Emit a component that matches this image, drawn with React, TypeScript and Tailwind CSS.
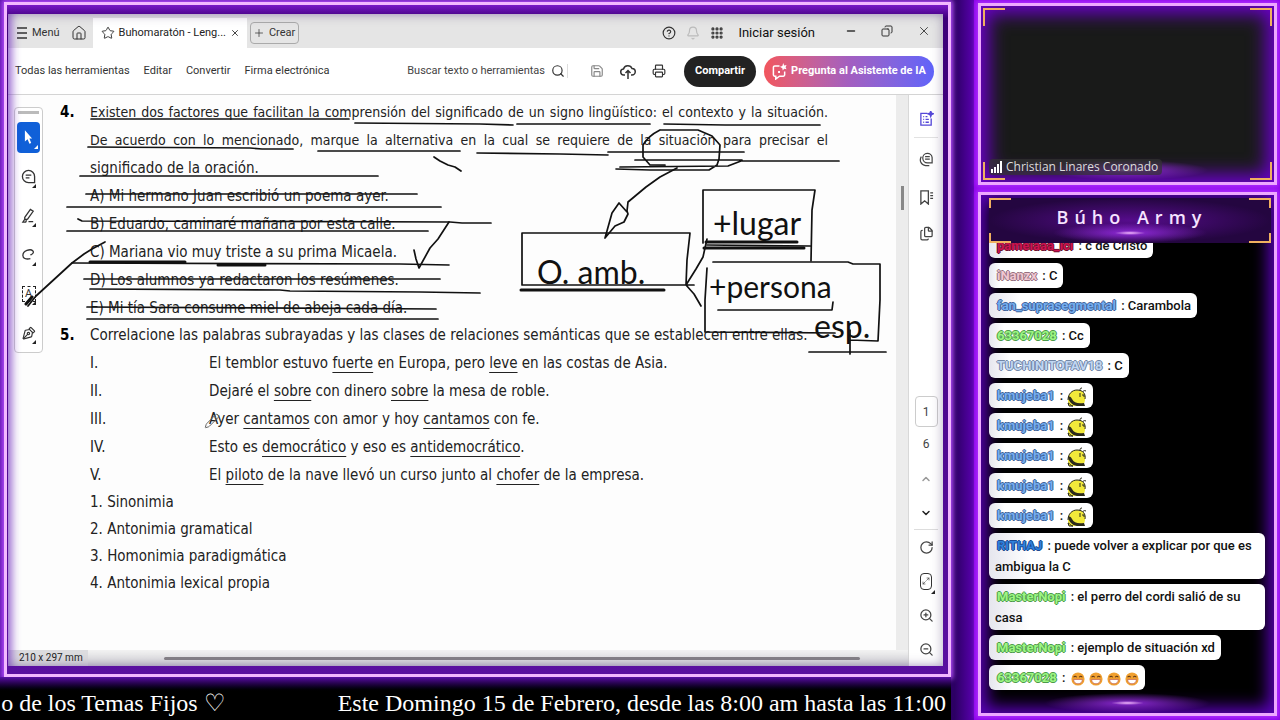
import type { ReactNode } from 'react';
import {
  Bell,
  ChevronDown,
  ChevronUp,
  CircleHelp,
  Copy,
  Files,
  Grip,
  House,
  Maximize2,
  Minus,
  Pencil,
  PenTool,
  Plus,
  Printer,
  RotateCw,
  Save,
  Search,
  Star,
  X,
  ZoomIn,
  ZoomOut,
} from 'lucide-react';

type Message = {
  user: string;
  color: string;
  text?: string;
  emote?: 'bee' | 'grin';
  count?: number;
};

const GREEN = 'text-[#9cf582] [text-shadow:1px_0_#4c9a4a,-1px_0_#4c9a4a,0_1px_#4c9a4a,0_-1px_#4c9a4a]';
const BLUE = 'text-[#74aef0] [text-shadow:1px_0_#3f6298,-1px_0_#3f6298,0_1px_#3f6298,0_-1px_#3f6298]';
const NAVY = 'text-[#2f80dc] [text-shadow:1px_0_#1d4a90,-1px_0_#1d4a90,0_1px_#1d4a90,0_-1px_#1d4a90]';
const ICE = 'text-[#c0d6f2] [text-shadow:1px_0_#7186a6,-1px_0_#7186a6,0_1px_#7186a6,0_-1px_#7186a6]';
const PINK = 'text-[#f0c6d2] [text-shadow:1px_0_#96707e,-1px_0_#96707e,0_1px_#96707e,0_-1px_#96707e]';
const RED = 'text-[#cc1450] [text-shadow:1px_0_#6e0e30,-1px_0_#6e0e30,0_1px_#6e0e30,0_-1px_#6e0e30]';

const messages: Message[] = [
  { user: 'pamelaaa_lcl', color: RED, text: 'c de Cristo' },
  { user: 'iNanzx', color: PINK, text: 'C' },
  { user: 'fan_suprasegmental', color: BLUE, text: 'Carambola' },
  { user: '63367028', color: GREEN, text: 'Cc' },
  { user: 'TUCHINITOFAV18', color: ICE, text: 'C' },
  { user: 'kmujeba1', color: BLUE, emote: 'bee' },
  { user: 'kmujeba1', color: BLUE, emote: 'bee' },
  { user: 'kmujeba1', color: BLUE, emote: 'bee' },
  { user: 'kmujeba1', color: BLUE, emote: 'bee' },
  { user: 'kmujeba1', color: BLUE, emote: 'bee' },
  { user: 'RITHAJ', color: NAVY, text: 'puede volver a explicar por que es ambigua la C' },
  { user: 'MasterNopi', color: GREEN, text: 'el perro del cordi salió de su casa' },
  { user: 'MasterNopi', color: GREEN, text: 'ejemplo de situación xd' },
  { user: '63367028', color: GREEN, emote: 'grin', count: 4 },
];

const options = [
  'A) Mi hermano Juan escribió un poema ayer.',
  'B) Eduardo, caminaré mañana por esta calle.',
  'C) Mariana vio muy triste a su prima Micaela.',
  'D) Los alumnos ya redactaron los resúmenes.',
  'E) Mi tía Sara consume miel de abeja cada día.',
];

const sentences: [string, ReactNode][] = [
  ['I.', <>El temblor estuvo <u>fuerte</u> en Europa, pero <u>leve</u> en las costas de Asia.</>],
  ['II.', <>Dejaré el <u>sobre</u> con dinero <u>sobre</u> la mesa de roble.</>],
  ['III.', <>Ayer <u>cantamos</u> con amor y hoy <u>cantamos</u> con fe.</>],
  ['IV.', <>Esto es <u>democrático</u> y eso es <u>antidemocrático</u>.</>],
  ['V.', <>El <u>piloto</u> de la nave llevó un curso junto al <u>chofer</u> de la empresa.</>],
];

const relations = ['1. Sinonimia', '2. Antonimia gramatical', '3. Homonimia paradigmática', '4. Antonimia lexical propia'];

function Bee() {
  return (
    <svg viewBox="0 0 20 20" className="-my-1 inline-block w-5 h-5 align-middle" role="img" aria-label="bee">
      <path d="M1 13C1 7 5 3 10 3c6 0 9 4 8 9 0 3-1 5-2 6l2 1H3c-2-1-2-4-2-6z" fill="#f2e93a" />
      <path d="M1 10c2-1 3 0 4 2 2 4 6 5 12 4l1 3h-8C5 18 2 15 1 10z" fill="#2b2a1c" />
      <path d="M1 16c2 0 2 3 5 3H2z" fill="#f2e93a" stroke="#2b2a1c" />
      <path d="M1 13C1 7 5 3 10 3c6 0 9 4 8 9" stroke="#2b2a1c" fill="none" />
      <path d="M13 4c0-2 0-3 2-3M16 5c0-1 1-2 3-1M13 6v4M16 7v2h2" stroke="#2b2a1c" fill="none" />
    </svg>
  );
}

function Grin() {
  return (
    <svg viewBox="0 0 16 16" className="w-[14px] h-[14px]" role="img" aria-label="grin">
      <circle cx="8" cy="8" r="7.500" fill="#f0a030" />
      <path d="M3 6q1.500-2.500 3.500 0M9.500 6q1.500-2.500 3.500 0" stroke="#5b3716" strokeWidth="1.200" fill="none" />
      <path d="M3 8.500h10c0 3-2 5-5 5s-5-2-5-5z" fill="#fff" stroke="#c05a4a" strokeWidth=".8" />
    </svg>
  );
}

function Corners({ size }: { size: string }) {
  return (
    <>
      <span className={`absolute left-0 top-0 w-[22px] border-l-2 border-t-2 border-[#f0b060] ${size}`} />
      <span className={`absolute right-0 top-0 w-[22px] border-r-2 border-t-2 border-[#f0b060] ${size}`} />
      <span className={`absolute left-0 bottom-0 w-[22px] border-l-2 border-b-2 border-[#f0b060] ${size}`} />
      <span className={`absolute right-0 bottom-0 w-[22px] border-r-2 border-b-2 border-[#f0b060] ${size}`} />
    </>
  );
}

function Menu() {
  return (
    <svg viewBox="0 0 12 12" className="w-3 h-3" stroke="currentColor" strokeWidth="1.500">
      <path d="M1 1h10M1 6h10M1 11h10" />
    </svg>
  );
}

function TitleBar() {
  return (
    <div className="h-[34px] bg-[#e5e5e5] flex items-center text-[11px] text-[#333] pt-1">
      <button className="flex items-center gap-1 pl-2">
        <Menu />
        <span>Menú</span>
      </button>
      <button aria-label="Inicio" className="ml-[11px]">
        <House className="w-4 h-4" strokeWidth={1.5} />
      </button>
      <div className="ml-[6px] h-full w-[154px] bg-white flex items-center gap-1 px-2 text-[#222]">
        <Star className="w-[14px] h-[14px] shrink-0" strokeWidth={1.5} />
        <span className="flex-1 whitespace-nowrap">Buhomaratón - Leng...</span>
        <button aria-label="Cerrar pestaña">
          <X className="w-[10px] h-[10px]" />
        </button>
      </div>
      <button className="ml-[3px] h-[22px] w-[49px] flex items-center justify-center gap-1 rounded border border-[#aaa]">
        <Plus className="w-3 h-3" strokeWidth={1.5} />
        Crear
      </button>
      <div className="ml-auto flex items-center gap-[10px]">
        <button aria-label="Ayuda"><CircleHelp className="w-[14px] h-[14px]" /></button>
        <button aria-label="Notificaciones" className="text-[#bbb]"><Bell className="w-[14px] h-[14px]" /></button>
        <button aria-label="Aplicaciones"><Grip className="w-[14px] h-[14px]" strokeWidth={3.5} /></button>
        <button className="ml-1 text-[13px] text-[#111]">Iniciar sesión</button>
      </div>
      <div className="flex items-center gap-6 pl-[30px] pr-3 pb-1">
        <button aria-label="Minimizar"><Minus className="w-3 h-3" strokeWidth={3} /></button>
        <button aria-label="Restaurar"><Copy className="w-3 h-3 -scale-x-100" /></button>
        <button aria-label="Cerrar"><X className="w-[14px] h-[14px]" strokeWidth={1.5} /></button>
      </div>
    </div>
  );
}

function CloudUp() {
  return (
    <svg viewBox="0 0 16 16" className="w-4 h-4" fill="none" stroke="currentColor" strokeWidth="1.500">
      <path d="M5 12H4a3 3 0 0 1-.5-6A4.500 4.500 0 0 1 12 5.500a3.200 3.200 0 0 1 0 6.500h-1M8 16V7.500M5.500 10L8 7.500l2.500 2.500" />
    </svg>
  );
}

function AssistantIcon() {
  return (
    <svg viewBox="0 0 16 18" className="w-[15px] h-[17px]" fill="none" stroke="currentColor" strokeWidth="1.600">
      <path d="M8 3H3a1.500 1.500 0 0 0-1.500 1.500v8A1.500 1.500 0 0 0 3 14h1v3l4-3h4a1.500 1.500 0 0 0 1.500-1.500V9" />
      <path d="M12 0l1 2.500L15.500 2l-1 2.500 1 2-2.500-.5-1.500 2-.5-2.500L8.500 4l2.500-1zM6.500 8.500h2v2h-2z" fill="currentColor" stroke="none" />
    </svg>
  );
}

function Toolbar() {
  return (
    <div className="h-[47px] bg-white border-b border-[#d4d4d4] flex items-center text-[11px] text-[#333]">
      <nav className="flex gap-[14px] pl-[7px] whitespace-nowrap">
        <a href="#herramientas">Todas las herramientas</a>
        <a href="#editar">Editar</a>
        <a href="#convertir">Convertir</a>
        <a href="#firma">Firma electrónica</a>
      </nav>
      <label className="ml-auto flex items-center gap-[6px]">
        <input
          type="text"
          aria-label="Buscar texto o herramientas"
          placeholder="Buscar texto o herramientas"
          className="w-[144px] text-right placeholder:text-[#444] outline-none"
        />
        <Search className="w-[14px] h-[14px]" />
      </label>
      <div className="mx-[2px] h-[14px] border-l border-[#ddd]" />
      <div className="flex items-center gap-4 pl-5 pr-[18px]">
        <button aria-label="Guardar" className="text-[#888]"><Save className="w-[14px] h-[14px]" /></button>
        <button aria-label="Subir"><CloudUp /></button>
        <button aria-label="Imprimir"><Printer className="w-[14px] h-[14px]" /></button>
      </div>
      <button className="h-[31px] w-[72px] rounded-full bg-[#222] text-white font-bold">Compartir</button>
      <button className="ml-2 mr-[9px] h-[31px] w-[170px] flex items-center justify-center gap-1 rounded-full bg-linear-to-r from-[#f2555c] via-[#a35fc0] to-[#5f63fa] text-white font-bold whitespace-nowrap">
        <AssistantIcon />
        Pregunta al Asistente de IA
      </button>
    </div>
  );
}

function Tool({ label, children }: { label: string; children: ReactNode }) {
  return (
    <button aria-label={label} className="relative flex h-[39px] w-full items-center justify-center">
      {children}
      <span className="absolute bottom-2 right-1 border-b-4 border-l-4 border-b-[#222] border-l-transparent" />
    </button>
  );
}

function ToolPalette() {
  return (
    <div className="absolute left-[6px] top-3 w-[29px] rounded border border-[#ccc] bg-white/90 px-[2px] pt-[3px] text-[#333]">
      <div className="mx-px h-[3px] bg-[#bbb]" />
      <button
        aria-label="Seleccionar"
        className="relative mt-2 flex h-[31px] w-full items-center justify-center rounded-sm bg-[#1060d8] text-white"
      >
        <svg viewBox="0 0 10 16" className="w-[9px] h-[15px]" fill="currentColor">
          <path d="M1 0l8 9H6l2 5-2 1-2-5-3 2.500z" />
        </svg>
        <span className="absolute bottom-1 right-[2px] border-b-4 border-l-4 border-b-white border-l-transparent" />
      </button>
      <div className="pt-1">
        <Tool label="Comentar">
          <svg viewBox="0 0 16 16" className="w-[15px] h-[15px]" fill="none" stroke="currentColor" strokeWidth="1.400">
            <path d="M14.500 8A6.500 6.500 0 1 0 8 14.500h6.500zM5 6.500h6M5 9.500h4" />
          </svg>
        </Tool>
        <Tool label="Resaltar">
          <svg viewBox="0 0 16 16" className="w-[15px] h-[15px]" fill="none" stroke="currentColor" strokeWidth="1.400">
            <path d="M4 10l6-8.500 3 2L7 12l-3 .5zM4 12l-2 3h3l1-2M8 14.500h5" />
          </svg>
        </Tool>
        <Tool label="Dibujar">
          <svg viewBox="0 0 16 16" className="w-[15px] h-[15px]" fill="none" stroke="currentColor" strokeWidth="1.400">
            <path d="M10 8.500c3-1 4-3 2.500-4.500C10 1.500 2 4 2 9c0 3 3 4.500 8 3.500" />
          </svg>
        </Tool>
        <Tool label="Texto">
          <span className="flex h-4 w-[14px] items-center justify-center border border-dashed border-[#222] text-[11px] leading-none">A</span>
        </Tool>
        <Tool label="Firmar"><PenTool className="w-[14px] h-[14px] -rotate-90" /></Tool>
      </div>
    </div>
  );
}

// Pen strokes of the teacher, in window coordinates
const strokes = [
  'M91 119H349M355 123L480 124 513 125M517 124H650M664 124L725 125H820',
  'M88 147L250 148 262 149H293M318 151H460M477 153L560 154 608 155M608 152H744',
  'M80 176H378M434 157l6 4 8 4 7 2 6 4',
  'M86 194H417M67 207H441M78 219l4 2 368 1 12 1H491M67 231H428',
  'M28 306l8-10 36-33 12-9 8-5 13-7',
  'M72 263L400 264 449 265M84 279H440M90 289L280 290 290 291 420 292 480 293M87 307L436 309M87 319H438',
  'M414 250l2 9 3 9 11-20 8-9 11-17',
  'M660 130H698l14 6 8 9-1 14-2 6-8 5H650L616 169M660 130q-12 6-17 15v12l7 8h15M620 167L728 166 741 161H839M635 160H742',
  'M677 168l-17 9-14 10-18 15-1 9 1 3-4 8-9 4-10 12 7-25 7-10 8 9',
  'M522 233H690l-3 27-1 25H522zM686 285h8M686 285l10-16 7-12 4-18M686 285l8 9 7 12',
  'M703 190H815l-3 20-1 51M703 190V243M707 245L810 246',
  'M713 262H848l5 2H880V300l-2 41-28-1M707 268l-2 32V332L835 333M718 310H832l1-8M809 352H886M850 330V354',
];

function Ink() {
  return (
    <svg
      viewBox="8 95 880 270"
      className="pointer-events-none absolute left-0 top-0 w-[880px] h-[270px]"
      fill="none"
      stroke="#111"
      strokeWidth="1.700"
      strokeLinecap="round"
      strokeLinejoin="round"
    >
      {strokes.map((d) => (
        <path key={d} d={d} />
      ))}
      <path d="M521 290H664M706 242H797M704 248H804M26 304l6-7M90 262H185M218 265H265" strokeWidth="3" />
      <g fill="#111" stroke="none" fontSize="32" fontFamily="Lato, sans-serif">
        <text x="537" y="284">O. amb.</text>
        <text x="713" y="235">+lugar</text>
        <text x="709" y="298" fontSize="30">+persona</text>
        <text x="814" y="338">esp.</text>
      </g>
    </svg>
  );
}

function Exam() {
  return (
    <article className="flex-1 pl-[52px] pt-[3px] font-['DejaVu_Sans_Condensed','DejaVu_Sans',sans-serif] text-[15px] leading-7 text-[#222] whitespace-nowrap">
      <div className="flex">
        <b className="w-[30px] text-black">4.</b>
        <div className="w-[738px]">
          <p className="text-sm/7 [text-align-last:justify]">
            Existen dos factores que facilitan la comprensión del significado de un signo lingüístico: el contexto y la situación.
          </p>
          <p className="text-sm/7 [text-align-last:justify]">
            De acuerdo con lo mencionado, marque la alternativa en la cual se requiere de la situación para precisar el
          </p>
          <p>significado de la oración.</p>
          {options.map((option) => (
            <p key={option}>{option}</p>
          ))}
        </div>
      </div>
      <div className="flex">
        <b className="w-[30px] text-black leading-[27px]">5.</b>
        <div>
          <p className="leading-[27px]">
            Correlacione las palabras subrayadas y las clases de relaciones semánticas que se establecen entre ellas.
          </p>
          {sentences.map(([label, text]) => (
            <p key={label} className="flex [&_u]:underline-offset-4">
              <span className="w-[119px]">{label}</span>
              <span>{text}</span>
            </p>
          ))}
          {relations.map((relation) => (
            <p key={relation} className="leading-[27px]">{relation}</p>
          ))}
        </div>
      </div>
    </article>
  );
}

function SideRail() {
  const slot = 'flex h-[34px] w-full items-center justify-center';
  return (
    <div className="w-[35px] border-l border-[#d8d8d8] bg-white flex flex-col items-center pt-1 text-xs text-[#444]">
      <button aria-label="Resumen" className="flex h-[38px] items-center text-[#5548d8]">
        <svg viewBox="0 0 16 16" className="w-[15px] h-[15px]" fill="none" stroke="currentColor" strokeWidth="1.400">
          <path d="M9 2.500H2v12.500h11V8M4.500 6h1M7 6h2M4.500 9h1M7 9h3.500M4.500 12h1M7 12h3.500" />
          <path d="M12.500 0l.8 2.200 2.200.8-2.200.8-.8 2.200-.8-2.200-2.200-.8 2.200-.8z" fill="currentColor" />
        </svg>
      </button>
      <div className="w-6 border-t border-[#e2e2e2]" />
      <button aria-label="Comentarios" className="flex h-[42px] items-center">
        <svg viewBox="0 0 16 16" className="w-[15px] h-[15px]" fill="none" stroke="currentColor" strokeWidth="1.300">
          <path d="M14 6a5 5 0 1 0-5 5.500h5zM6.500 5h5M6.500 7.500h5M2.500 5C0 9 2 14 7 14.500h4" />
        </svg>
      </button>
      <button aria-label="Marcadores" className="flex h-[34px] items-center">
        <svg viewBox="0 0 16 16" className="w-[15px] h-[15px]" fill="none" stroke="currentColor" strokeWidth="1.400">
          <path d="M9.500 1H2v14l4-3.500L10 15V1zM12 3h3M12 6h3M12 9h3" />
        </svg>
      </button>
      <button aria-label="Páginas" className="flex h-[38px] items-center"><Files className="w-[15px] h-[15px]" /></button>
      <input
        aria-label="Página"
        defaultValue="1"
        className="mt-auto h-[31px] w-[23px] rounded border border-[#ccc] text-center"
      />
      <span className={slot}>6</span>
      <button aria-label="Anterior" className="flex h-9 items-center text-[#999]"><ChevronUp className="w-3 h-3" strokeWidth={3} /></button>
      <button aria-label="Siguiente" className="flex h-[32px] items-center text-[#222]"><ChevronDown className="w-3 h-3" strokeWidth={3} /></button>
      <div className="w-6 border-t border-[#ddd]" />
      <button aria-label="Girar" className={slot}><RotateCw className="w-[15px] h-[15px]" /></button>
      <button aria-label="Ajustar" className={`relative ${slot}`}>
        <span className="flex h-[17px] w-[12px] items-center justify-center rounded-sm border border-[#333]"><Maximize2 className="w-2 h-2" /></span>
        <span className="absolute bottom-1 right-2 border-b-4 border-l-4 border-b-[#222] border-l-transparent" />
      </button>
      <button aria-label="Acercar" className={slot}><ZoomIn className="w-[15px] h-[15px]" /></button>
      <button aria-label="Alejar" className={slot}><ZoomOut className="w-[15px] h-[15px]" /></button>
    </div>
  );
}

function Reader() {
  return (
    <div className="relative flex-1 min-h-0 flex flex-col bg-[#fdfdfd] overflow-hidden font-['Roboto',sans-serif]">
      <TitleBar />
      <Toolbar />
      <div className="flex-1 min-h-0 flex">
        <div className="flex-1 min-w-0 flex flex-col">
          <div className="relative flex-1 min-h-0 flex">
            <Exam />
            <ToolPalette />
            <Ink />
            <Pencil className="absolute left-[196px] top-[316px] w-4 h-5 text-[#666]" strokeWidth={1.5} />
            <div className="w-3 shrink-0 bg-[#ececec] pt-[91px] flex justify-center">
              <div className="h-6 w-[3px] bg-[#888]" />
            </div>
          </div>
          <div className="h-4 shrink-0 flex items-center bg-linear-to-b from-[#f2f2f2] to-[#d2d2d6]">
            <span className="h-full w-20 pl-[11px] bg-[#dcdcdf] text-[10px] leading-[15px] text-[#222] whitespace-nowrap">210 x 297 mm</span>
            <span className="ml-[76px] mr-[48px] h-[3px] flex-1 rounded bg-[#858287]" />
          </div>
        </div>
        <SideRail />
      </div>
      <div className="pointer-events-none absolute inset-0 shadow-[inset_0_0_12px_rgba(60,40,100,0.4),inset_8px_0_10px_-5px_rgba(140,60,230,0.7)]" />
    </div>
  );
}

function Ticker() {
  return (
    <div className="h-[43px] mr-[23px] flex items-center justify-end gap-28 overflow-hidden bg-linear-to-b from-[#5a10a8] to-black to-35% pt-2 pr-[5px] font-['Liberation_Serif',serif] text-2xl text-white whitespace-nowrap">
      <span>o de los Temas Fijos ♡</span>
      <span>Este Domingo 15 de Febrero, desde las 8:00 am hasta las 11:00</span>
    </div>
  );
}

function Flare() {
  return (
    <div className="pointer-events-none absolute inset-x-16 bottom-0 h-5 bg-[radial-gradient(closest-side,#f4b8ff_0%,#a030f0aa_20%,transparent_100%)]" />
  );
}

function Camera() {
  return (
    <section className="h-[182px] shrink-0 border-[3px] border-[#eda8ff] bg-[#191a19] p-[2px] shadow-[0_0_5px_2px_#b030ff,inset_0_0_18px_8px_#6a00c8]">
      <div className="relative h-full flex items-end">
        <Corners size="h-[18px]" />
        <Flare />
        <div className="relative ml-[6px] mb-[5px] h-4 flex items-center gap-1 rounded-sm bg-[#333]/70 pl-[2px] pr-1 font-['Open_Sans',sans-serif] text-xs text-[#ddd]">
          <span className="flex h-3 items-end gap-px">
            <i className="h-1 w-[2px] bg-white" />
            <i className="h-[6px] w-[2px] bg-white" />
            <i className="h-[9px] w-[2px] bg-white" />
            <i className="h-3 w-[2px] bg-white" />
          </span>
          Christian Linares Coronado
        </div>
      </div>
    </section>
  );
}

function ChatMessage({ message }: { message: Message }) {
  return (
    <li className="w-fit max-w-full shrink-0 rounded-md bg-linear-to-r from-[#e6e6ee] to-white to-15% px-[6px] py-[2px] text-[13px] leading-[21px] text-[#111]">
      <b className={`mx-[2px] ${message.color}`}>{message.user}</b>
      {' : '}
      {message.text}
      {message.emote === 'bee' && <Bee />}
      {message.emote === 'grin' && (
        <span className="inline-flex gap-1 pl-[2px] align-middle">
          {Array.from({ length: message.count ?? 1 }, (_, i) => (
            <Grin key={i} />
          ))}
        </span>
      )}
    </li>
  );
}

function Chat() {
  return (
    <section className="relative flex-1 min-h-0 flex flex-col border-[3px] border-[#eda8ff] bg-black p-[3px] pl-2 pb-[23px] shadow-[0_0_5px_2px_#b030ff,inset_0_0_16px_6px_#5a00b8]">
      <header className="relative h-[45px] shrink-0 flex items-center justify-center bg-[radial-gradient(closest-side,#560c8c,#240640)]">
        <Corners size="h-[10px]" />
        <Flare />
        <h1 className="pb-2 pl-1 font-['Open_Sans',sans-serif] text-lg font-semibold tracking-[6px] text-[#f6e4ff]">Búho Army</h1>
      </header>
      <ul className="flex-1 min-h-0 flex flex-col justify-end gap-[5px] overflow-hidden pr-[6px] font-['Roboto',sans-serif] font-medium">
        {messages.map((message, i) => (
          <ChatMessage key={i} message={message} />
        ))}
      </ul>
      <Flare />
    </section>
  );
}

export default function App() {
  return (
    <div className="h-screen flex overflow-hidden bg-[#2c0064]">
      <main className="flex-1 min-w-0 flex flex-col bg-linear-to-l from-[#5a00b0] via-[#2c0064] via-2% to-[#5a10a8]">
        <div className="ml-1 mt-[2px] mr-[23px] flex-1 min-h-0 flex flex-col border-[3px] border-[#f2b8ff] bg-linear-to-b from-[#7a18c8] via-[#3c0078] via-2% to-[#5a10a0] pl-px pr-[5px] pt-[9px] pb-2 shadow-[0_0_5px_2px_#b850ff]">
          <Reader />
        </div>
        <Ticker />
      </main>
      <aside className="w-[306px] shrink-0 flex flex-col gap-[7px] bg-[#8a00e8] pt-[3px] pr-[3px] pb-1 pl-1">
        <Camera />
        <Chat />
      </aside>
    </div>
  );
}
